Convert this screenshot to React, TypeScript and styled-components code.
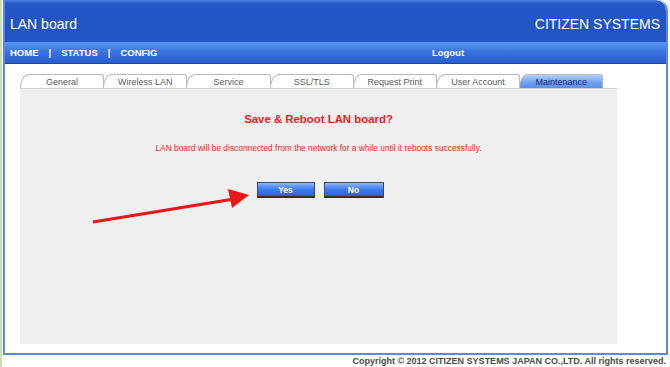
import React from "react";
import styled, { createGlobalStyle } from "styled-components";

const GlobalStyle = createGlobalStyle`
  html, body {
    margin: 0;
    padding: 0;
    background: #ffffff;
  }
  body {
    font-family: "Liberation Sans", Arial, sans-serif;
  }
`;

const Page = styled.div`
  width: 670px;
  height: 367px;
  box-sizing: border-box;
  border-left: 2px solid #c6e3b4;
  overflow: hidden;
`;

const Frame = styled.div`
  margin: 0 2px 0 1px;
  height: 355px;
  box-sizing: border-box;
  border: 2px solid #6286e0;
  border-top: none;
  border-top-right-radius: 11px;
  display: flex;
  flex-direction: column;
  overflow: hidden;
`;

const Header = styled.header`
  height: 42px;
  flex: 0 0 auto;
  display: flex;
  align-items: center;
  justify-content: space-between;
  padding: 6px 6px 0 5px;
  box-sizing: border-box;
  background: linear-gradient(#4a80e4 0px, #2456c6 4px, #2253c2 100%);
  border-top-right-radius: 10px;
  color: #ffffff;
  font-size: 14px;
`;

const Nav = styled.nav`
  height: 21px;
  flex: 0 0 auto;
  display: grid;
  grid-template-columns: 225px 1fr;
  align-items: center;
  background: linear-gradient(#5a97f2, #3a74e0 45%, #2a5ccc);
  border-bottom: 1px solid #1d48a8;
  color: #ffffff;
  font-size: 9.5px;
  font-weight: 700;
`;

const NavLinks = styled.div`
  display: flex;
  gap: 10px;
  padding-left: 5px;
`;

const Logout = styled.div`
  text-align: center;
`;

const Body = styled.div`
  flex: 1;
  padding: 10px 49px 9px 15px;
  display: flex;
  flex-direction: column;
`;

const Tabs = styled.div`
  display: flex;
  height: 14px;
`;

const Tab = styled.div<{ active?: boolean }>`
  width: 84.2px;
  box-sizing: border-box;
  border: 1px solid #b9b9b9;
  border-bottom: none;
  border-top-left-radius: 9px 14px;
  border-top-right-radius: 3px;
  margin-right: -1px;
  display: flex;
  align-items: center;
  justify-content: center;
  font-size: 9px;
  color: ${({ active }) => (active ? "#1c2a7a" : "#5a5a5a")};
  background: ${({ active }) =>
    active ? "linear-gradient(#b3d0fb, #6d9fee 60%, #5b90ea)" : "#ffffff"};
`;

const Panel = styled.div`
  position: relative;
  flex: 1;
  background: #efefef;
  border-top: 1px solid #cfcfcf;
  display: flex;
  flex-direction: column;
  align-items: center;
  padding-top: 23px;
`;

const Title = styled.h1`
  margin: 0;
  color: #f41a1a;
  font-size: 11.4px;
  line-height: 14px;
  font-weight: 700;
`;

const Message = styled.p`
  margin: 17px 0 0 0;
  color: #f41a1a;
  font-size: 8.4px;
  line-height: 10px;
`;

const Buttons = styled.div`
  display: flex;
  gap: 9px;
  margin-top: 29px;
  padding-left: 3px;
`;

const Button = styled.button<{ w: number }>`
  width: ${({ w }) => w}px;
  height: 16px;
  padding: 0;
  box-sizing: border-box;
  border: 1px solid #3f4a5c;
  border-bottom: 2px solid #2a2f38;
  background: linear-gradient(#8bb6fa, #3d7bea 50%, #2a62da);
  color: #ffffff;
  font-family: "Liberation Sans", Arial, sans-serif;
  font-size: 8.5px;
  font-weight: 700;
`;

const Arrow = styled.svg`
  position: absolute;
  left: 0;
  top: 0;
  pointer-events: none;
`;

const Footer = styled.footer`
  text-align: right;
  padding-right: 4px;
  margin-top: 1px;
  font-size: 9px;
  font-weight: 700;
  color: #4a4a4a;
  line-height: 11px;
`;

const tabs = [
  "General",
  "Wireless LAN",
  "Service",
  "SSL/TLS",
  "Request Print",
  "User Account",
  "Maintenance",
];

const App: React.FC = () => {
  return (
    <>
      <GlobalStyle />
      <Page>
        <Frame>
          <Header>
            <span>LAN board</span>
            <span>CITIZEN SYSTEMS</span>
          </Header>
          <Nav>
            <NavLinks>
              <span>HOME</span>
              <span>|</span>
              <span>STATUS</span>
              <span>|</span>
              <span>CONFIG</span>
            </NavLinks>
            <Logout>Logout</Logout>
          </Nav>
          <Body>
            <Tabs>
              {tabs.map((t) => (
                <Tab key={t} active={t === "Maintenance"}>
                  {t}
                </Tab>
              ))}
            </Tabs>
            <Panel>
              <Title>Save &amp; Reboot LAN board?</Title>
              <Message>
                LAN board will be disconnected from the network for a while
                until it reboots successfully.
              </Message>
              <Buttons>
                <Button w={58}>Yes</Button>
                <Button w={60}>No</Button>
              </Buttons>
              <Arrow width="260" height="150" viewBox="0 0 260 150">
                <line
                  x1="73"
                  y1="133"
                  x2="214"
                  y2="110"
                  stroke="#f01414"
                  strokeWidth="3.2"
                />
                <polygon points="208,100 229,106 212,119" fill="#f01414" />
              </Arrow>
            </Panel>
          </Body>
        </Frame>
        <Footer>
          Copyright © 2012 CITIZEN SYSTEMS JAPAN CO.,LTD. All rights reserved.
        </Footer>
      </Page>
    </>
  );
};

export default App;
